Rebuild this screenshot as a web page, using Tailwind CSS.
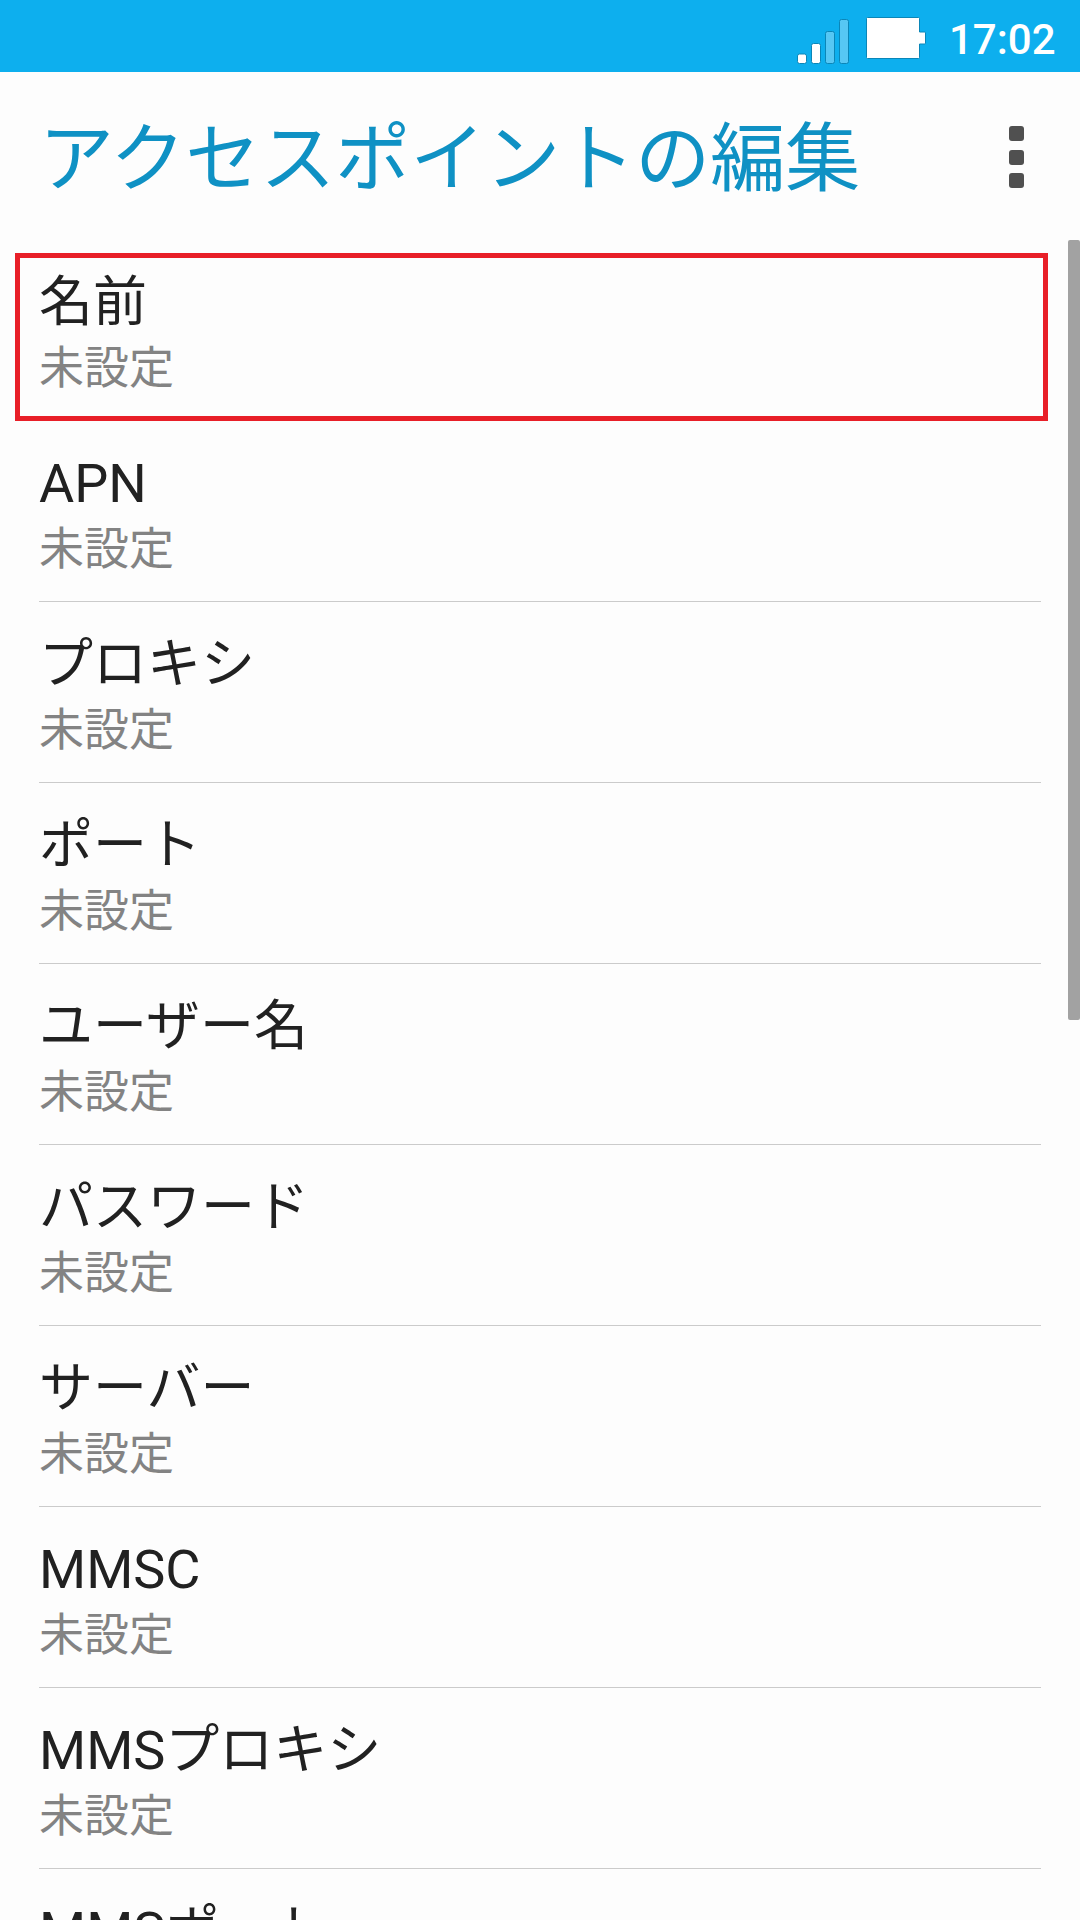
<!DOCTYPE html>
<html lang="ja">
<head>
    <meta charset="UTF-8">
    <meta name="viewport" content="width=device-width, initial-scale=1.0">
    <title>アクセスポイントの編集</title>
    <script src="https://cdn.jsdelivr.net/npm/@tailwindcss/browser@4"></script>
    <style> body { font-family: Roboto, 'Noto Sans CJK JP', sans-serif; } </style>
</head>
<body class="bg-[#fdfdfd] text-[#212121] w-[1080px] h-[1920px] overflow-hidden flex flex-col">
    <!-- Status bar -->
    <div class="h-[72px] shrink-0 bg-[#0dafee] flex justify-end">
        <svg class="w-[150px] h-[72px]" viewBox="0 0 150 72" fill="#fff" stroke="#0a86b8" stroke-width="1">
            <rect x="17.500" y="54" width="9" height="9.500" rx="2"/>
            <rect x="31.500" y="43.500" width="9" height="20" rx="2"/>
            <rect x="45.500" y="31.500" width="9" height="32" rx="2" fill="#56c7f4"/>
            <rect x="59.500" y="19.500" width="9" height="44" rx="2" fill="#56c7f4"/>
            <path d="M87.500 17.500h51a1 1 0 0 1 1 1V32h5a1 1 0 0 1 1 1v10a1 1 0 0 1-1 1h-5v13.500a1 1 0 0 1-1 1h-51a1 1 0 0 1-1-1v-39a1 1 0 0 1 1-1z"/>
        </svg>
        <span class="w-[131px] ml-[19px] text-[42px] leading-[80px] font-medium text-white whitespace-nowrap">17:02</span>
    </div>

    <!-- Header -->
    <header class="h-[168px] shrink-0 flex justify-between pl-[39px] pr-[56px]">
        <h1 class="text-[75px] leading-[174px] text-[#0f91c4] whitespace-nowrap">アクセスポイントの編集</h1>
        <div class="flex flex-col gap-[8.5px] pt-[54px]">
            <span class="size-[15px] rounded-[3px] bg-[#505050]"></span>
            <span class="size-[15px] rounded-[3px] bg-[#505050]"></span>
            <span class="size-[15px] rounded-[3px] bg-[#505050]"></span>
        </div>
    </header>

    <!-- Settings list -->
    <main class="relative flex-1 min-h-0 overflow-hidden pl-[39px] pr-[39px]">
        <div class="absolute left-[15px] top-[13px] w-[1033px] h-[168px] border-[5px] border-[#e81f28]"></div>
        <div class="absolute right-0 top-0 w-[12px] h-[780px] rounded-xs bg-[#a2a2a2]"></div>
        <ul>
            <li class="h-[181px] pt-[31px]">
                <p class="text-[54px] leading-[64px]">名前</p>
                <p class="text-[45px] leading-[52px] mt-[8px] text-[#838383]">未設定</p>
            </li>
            <li class="h-[181px] pt-[31px] border-b border-[#cbcbcb]">
                <p class="text-[54px] leading-[64px]">APN</p>
                <p class="text-[45px] leading-[52px] mt-[8px] text-[#838383]">未設定</p>
            </li>
            <li class="h-[181px] pt-[31px] border-b border-[#cbcbcb]">
                <p class="text-[54px] leading-[64px]">プロキシ</p>
                <p class="text-[45px] leading-[52px] mt-[8px] text-[#838383]">未設定</p>
            </li>
            <li class="h-[181px] pt-[31px] border-b border-[#cbcbcb]">
                <p class="text-[54px] leading-[64px]">ポート</p>
                <p class="text-[45px] leading-[52px] mt-[8px] text-[#838383]">未設定</p>
            </li>
            <li class="h-[181px] pt-[31px] border-b border-[#cbcbcb]">
                <p class="text-[54px] leading-[64px]">ユーザー名</p>
                <p class="text-[45px] leading-[52px] mt-[8px] text-[#838383]">未設定</p>
            </li>
            <li class="h-[181px] pt-[31px] border-b border-[#cbcbcb]">
                <p class="text-[54px] leading-[64px]">パスワード</p>
                <p class="text-[45px] leading-[52px] mt-[8px] text-[#838383]">未設定</p>
            </li>
            <li class="h-[181px] pt-[31px] border-b border-[#cbcbcb]">
                <p class="text-[54px] leading-[64px]">サーバー</p>
                <p class="text-[45px] leading-[52px] mt-[8px] text-[#838383]">未設定</p>
            </li>
            <li class="h-[181px] pt-[31px] border-b border-[#cbcbcb]">
                <p class="text-[54px] leading-[64px]">MMSC</p>
                <p class="text-[45px] leading-[52px] mt-[8px] text-[#838383]">未設定</p>
            </li>
            <li class="h-[181px] pt-[31px] border-b border-[#cbcbcb]">
                <p class="text-[54px] leading-[64px]">MMSプロキシ</p>
                <p class="text-[45px] leading-[52px] mt-[8px] text-[#838383]">未設定</p>
            </li>
            <li class="h-[181px] pt-[31px]">
                <p class="text-[54px] leading-[64px]">MMSポート</p>
            </li>
        </ul>
    </main>
</body>
</html>
